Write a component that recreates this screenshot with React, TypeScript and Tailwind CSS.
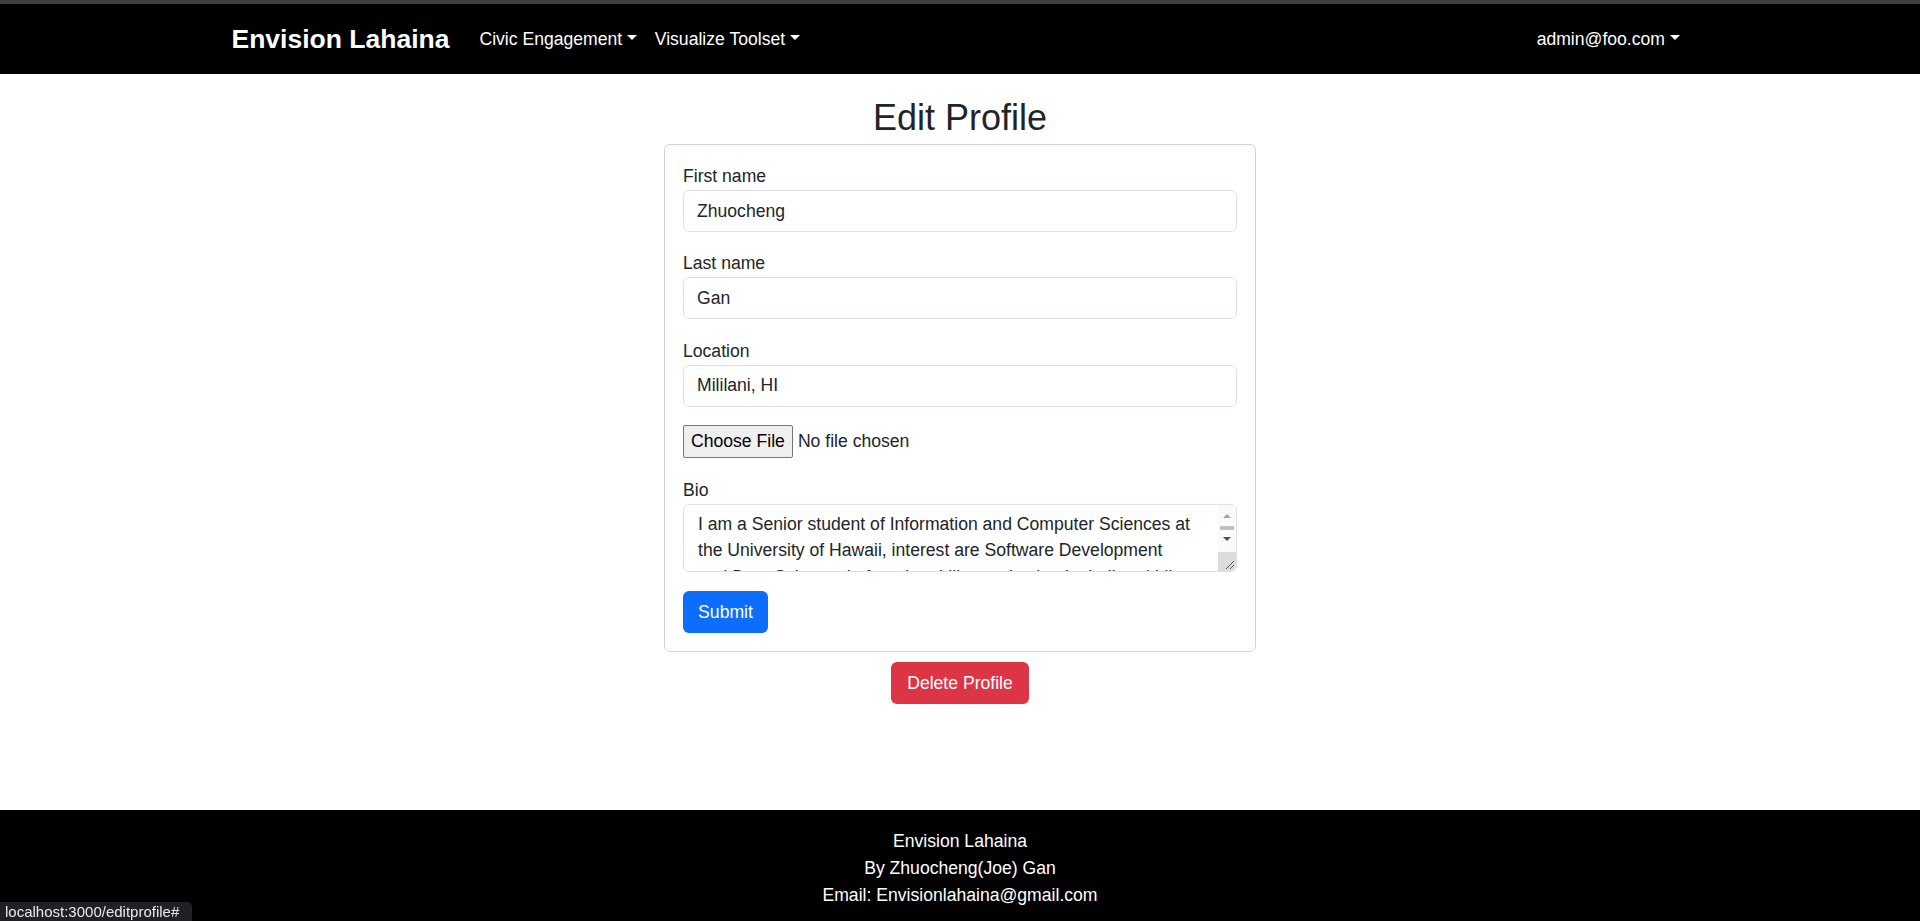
import React from 'react';

const font = { fontFamily: '"Segoe UI", "Liberation Sans", Arial, sans-serif' };

function Caret() {
  return (
    <span className="ml-[4.5px] inline-block h-0 w-0 translate-y-[-2px] border-x-[5px] border-t-[5px] border-x-transparent border-t-current align-middle" />
  );
}

function NavLink({ label }: { label: string }) {
  return (
    <a href="#" className="flex items-center px-[9px] text-[17.6px] leading-[26.4px] text-white">
      {label}
      <Caret />
    </a>
  );
}

function Field({ label, value }: { label: string; value: string }) {
  return (
    <div className="mb-[18.3px]">
      <label className="block text-[17.6px] leading-[27px] text-[#212529]">{label}</label>
      <input
        defaultValue={value}
        className="block h-[42px] w-full rounded-[6px] border border-[#dee2e6] px-[13px] text-[17.6px] text-[#212529] outline-none"
        style={font}
      />
    </div>
  );
}

export default function App() {
  return (
    <div className="flex min-h-screen flex-col bg-white" style={font}>
      <div className="h-[4px] bg-[#3e3e3e]" />

      {/* Navbar */}
      <nav className="bg-black">
        <div className="mx-auto flex h-[70px] w-[1457px] items-center">
          <a href="#" className="mr-[21px] text-[26.5px] font-bold leading-none text-white">
            Envision Lahaina
          </a>
          <NavLink label="Civic Engagement" />
          <NavLink label="Visualize Toolset" />
          <div className="ml-auto">
            <NavLink label="admin@foo.com" />
          </div>
        </div>
      </nav>

      {/* Main */}
      <main className="flex flex-1 flex-col items-center pt-[22px]">
        <h2 className="mb-[5px] text-[36px] font-medium leading-[43px] text-[#212529]">Edit Profile</h2>

        <div className="w-[592px] rounded-[6px] border border-[#d3d3d3] p-[18px]">
          <Field label="First name" value="Zhuocheng" />
          <Field label="Last name" value="Gan" />
          <Field label="Location" value="Mililani, HI" />

          {/* File input */}
          <div className="mb-[18px] flex h-[34px] items-start">
            <button className="h-[33px] rounded-[2px] border border-[#767676] bg-[#efefef] px-[7px] text-[17.6px] text-black">
              Choose File
            </button>
            <span className="ml-[5px] text-[17.6px] leading-[33px] text-[#212529]">No file chosen</span>
          </div>

          {/* Bio */}
          <div className="mb-[19px]">
            <label className="block text-[17.6px] leading-[27px] text-[#212529]">Bio</label>
            <div className="flex h-[68px] overflow-hidden rounded-[6px] border border-[#dee2e6]">
              <div className="flex-1 overflow-hidden whitespace-nowrap pl-[14px] pt-[6px] text-[17.6px] leading-[26.4px] text-[#212529]">
                <div>I am a Senior student of Information and Computer Sciences at</div>
                <div>the University of Hawaii, interest are Software Development</div>
                <div>and Data Science, in free time I like to play basketball and hike.</div>
              </div>
              <div className="flex w-[18px] flex-col items-center bg-[#fafafa]">
                <span className="mt-[9px] h-0 w-0 border-x-[4px] border-b-[4px] border-x-transparent border-b-[#a3a3a3]" />
                <span className="mt-[8px] h-[4px] w-[14px] bg-[#c1c1c1]" />
                <span className="mt-[7px] h-0 w-0 border-x-[4px] border-t-[4px] border-x-transparent border-t-[#505050]" />
                <div className="flex-1" />
                <div className="flex h-[19px] w-full items-end justify-end bg-[#dcdcdc] p-[2px]">
                  <svg width="9" height="9" viewBox="0 0 9 9">
                    <line x1="1" y1="9" x2="9" y2="1" stroke="#555" strokeWidth="1" />
                    <line x1="5" y1="9" x2="9" y2="5" stroke="#555" strokeWidth="1" />
                  </svg>
                </div>
              </div>
            </div>
          </div>

          <button className="h-[42px] w-[85px] rounded-[6px] bg-[#0d6efd] text-[17.6px] text-white">Submit</button>
        </div>

        <button className="mt-[10px] h-[42px] w-[138px] rounded-[6px] bg-[#dc3545] text-[17.6px] text-white">
          Delete Profile
        </button>
      </main>

      {/* Footer */}
      <footer className="bg-black pb-[12px] pt-[18px] text-center text-[17.6px] leading-[27px] text-white">
        <div>Envision Lahaina</div>
        <div>By Zhuocheng(Joe) Gan</div>
        <div>Email: Envisionlahaina@gmail.com</div>
      </footer>

      {/* Browser status bubble */}
      <div className="fixed bottom-0 left-0 flex h-[19px] w-[192px] items-center rounded-tr-[5px] bg-[#202124] pl-[5px] text-[15px] leading-none text-[#e8eaed]">
        localhost:3000/editprofile#
      </div>
    </div>
  );
}
